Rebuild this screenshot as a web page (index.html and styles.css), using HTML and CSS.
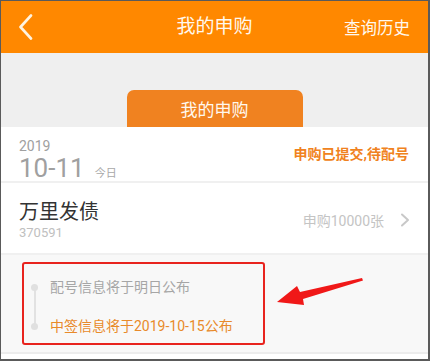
FILE: index.html
```html
<!DOCTYPE html>
<html lang="zh-CN">
<head>
<meta charset="utf-8">
<title>我的申购</title>
<link rel="stylesheet" href="styles.css">
</head>
<body>
<div class="frame">
  <header class="header">
    <svg class="back" width="16" height="26" viewBox="0 0 16 26"><polyline points="13,1.5 2.5,13 13,24.5" fill="none" stroke="#fff3e0" stroke-width="2.6" stroke-linecap="round" stroke-linejoin="round"/></svg>
    <div class="title">我的申购</div>
    <div class="history">查询历史</div>
  </header>
  <div class="tabbar">
    <div class="tab">我的申购</div>
  </div>
  <div class="card">
    <div class="row row-date">
      <div class="date">
        <div class="year">2019</div>
        <div class="day"><span class="md">10-11</span><span class="today">今日</span></div>
      </div>
      <div class="status">申购已提交,待配号</div>
    </div>
    <div class="row row-bond">
      <div class="bond">
        <div class="bond-name">万里发债</div>
        <div class="bond-code">370591</div>
      </div>
      <div class="amount">申购10000张
        <svg class="chev" width="10" height="14" viewBox="0 0 10 14"><polyline points="2,1.5 8,7 2,12.5" fill="none" stroke="#c8c8c8" stroke-width="2" stroke-linecap="round" stroke-linejoin="round"/></svg>
      </div>
    </div>
    <div class="timeline-wrap">
      <div class="timeline">
        <div class="tl-line"></div>
        <div class="tl-item"><span class="dot"></span><span class="tl-text grey">配号信息将于明日公布</span></div>
        <div class="tl-item"><span class="dot"></span><span class="tl-text orange">中签信息将于2019-10-15公布</span></div>
      </div>
      <svg class="arrow" width="90" height="40" viewBox="0 0 90 40"><polygon points="85,12 86,14.5 26,33 27,39 0,36 20,20 23,26" fill="#f01818"/></svg>
    </div>
  </div>
</div>
</body>
</html>
```
FILE: styles.css
```css
* { box-sizing: border-box; margin: 0; padding: 0; }
html, body { width: 430px; height: 361px; overflow: hidden; }
body {
  font-family: Roboto, "Noto Sans CJK SC", sans-serif;
  background: #efefef;
}
.frame {
  width: 430px;
  height: 361px;
  border-style: solid;
  border-color: #5a5a5a;
  border-width: 1px 2px 2px 1px;
  background: #efefef;
  display: flex;
  flex-direction: column;
}
.header {
  height: 52px;
  background: #ff8800;
  display: flex;
  align-items: center;
  justify-content: space-between;
  padding: 0 18px 0 17px;
  position: relative;
  flex-shrink: 0;
}
.back { display: block; }
.title {
  position: absolute;
  left: 0; right: 0;
  text-align: center;
  color: #fff8ee;
  font-size: 19px;
  line-height: 52px;
  pointer-events: none;
}
.history {
  color: #fff8ee;
  font-size: 16.5px;
}
.tabbar {
  height: 74px;
  display: flex;
  justify-content: center;
  align-items: flex-end;
  flex-shrink: 0;
}
.tab {
  width: 176px;
  height: 37px;
  background: #f08220;
  border-radius: 7px 7px 0 0;
  color: #fff8ee;
  font-size: 17px;
  display: flex;
  align-items: center;
  justify-content: center;
  padding-bottom: 1px;
}
.card {
  background: #fff;
  flex: 1;
  display: flex;
  flex-direction: column;
}
.row {
  display: flex;
  justify-content: space-between;
  align-items: center;
  padding: 0 19px 0 18px;
  border-bottom: 2px solid #f0f0f0;
}
.row-date { height: 56px; }
.date { margin-top: 17px; }
.year {
  font-size: 14px;
  color: #a0a0a0;
  line-height: 16px;
}
.day { display: flex; align-items: baseline; line-height: 28px; }
.md {
  font-size: 26px;
  color: #a0a0a0;
}
.today {
  font-size: 11px;
  color: #a8a8a8;
  margin-left: 10px;
}
.status {
  color: #f08220;
  font-size: 14px;
  font-weight: bold;
  margin-bottom: 2px;
}
.row-bond { height: 72px; padding-right: 18px; padding-top: 4px; }
.bond-name {
  font-size: 20px;
  color: #333;
  line-height: 24px;
}
.bond-code {
  font-size: 13px;
  color: #c0c0c0;
  line-height: 16px;
  margin-top: 1px;
}
.amount {
  display: flex;
  align-items: center;
  gap: 16px;
  color: #c4c4c4;
  font-size: 14px;
}
.chev { display: block; }
.timeline-wrap {
  background: #f8f8f8;
  height: 99px;
  border-bottom: 2px solid #ececec;
  padding: 7px 0 0 21px;
  position: relative;
}
.timeline {
  width: 243px;
  height: 83px;
  border: 2.5px solid #e8231e;
  border-radius: 3px;
  position: relative;
  display: flex;
  flex-direction: column;
  justify-content: space-between;
  padding: 14px 0 8px 7px;
}
.tl-line {
  position: absolute;
  left: 10px;
  top: 21px;
  height: 40px;
  width: 2px;
  background: #e2e2e2;
}
.tl-item {
  display: flex;
  align-items: center;
  position: relative;
}
.dot {
  width: 7px;
  height: 7px;
  border-radius: 50%;
  background: #e0e0e0;
  flex-shrink: 0;
}
.tl-text {
  font-size: 14px;
  margin-left: 12px;
  line-height: 18px;
}
.grey { color: #a6a6a6; }
.orange { color: #e88a2a; }
.arrow {
  position: absolute;
  left: 276px;
  top: 11px;
}
```
